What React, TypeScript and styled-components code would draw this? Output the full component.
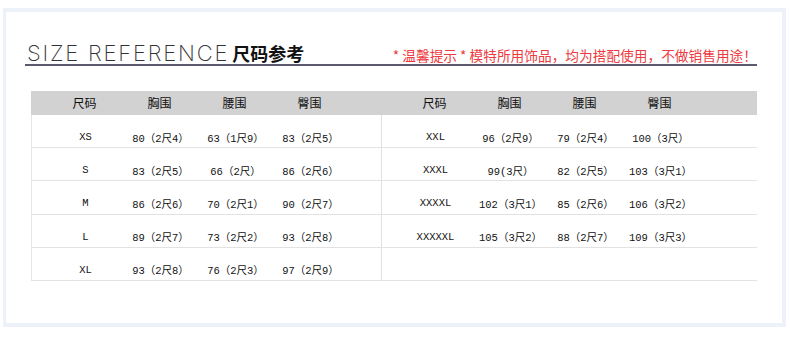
import React from "react";
import styled, { createGlobalStyle } from "styled-components";

const Global = createGlobalStyle`
  html, body { margin: 0; padding: 0; background: #ffffff; }
  body { font-family: "Noto Sans CJK SC", "Noto Sans", sans-serif; }
`;

const Frame = styled.div`
  box-sizing: border-box;
  width: 783px;
  height: 319px;
  margin: 8px 0 0 3px;
  border: 4px solid #edf2fa;
  border-left-width: 3px;
  background: #ffffff;
  padding: 0 25px 0 19px;
`;

const TitleRow = styled.div`
  display: flex;
  align-items: baseline;
  justify-content: space-between;
  padding: 31px 0 1px 2px;
  border-bottom: 2px solid #5a5a6c;
`;

const Title = styled.div`
  display: flex;
  align-items: baseline;
  gap: 3px;
`;

const TitleEn = styled.span`
  font-family: "Inter", "Open Sans", sans-serif;
  font-weight: 200;
  font-size: 22px;
  line-height: 20px;
  color: #333333;
  letter-spacing: 1.8px;
`;

const TitleCn = styled.span`
  font-family: "Noto Sans CJK SC", sans-serif;
  font-weight: 700;
  font-size: 18px;
  line-height: 20px;
  color: #111111;
`;

const Notice = styled.span`
  font-family: "Noto Sans CJK SC", sans-serif;
  font-size: 13.7px;
  line-height: 14px;
  color: #ec3a40;
  white-space: pre;
`;

const Table = styled.div`
  margin: 25px 0 0 6px;
  width: 726px;
  display: flex;
  flex-direction: column;
`;

const Row = styled.div<{ $head?: boolean }>`
  display: flex;
  height: ${(p) => (p.$head ? "24px" : "33.2px")};
  box-sizing: border-box;
  background: ${(p) => (p.$head ? "#d2d2d2" : "#ffffff")};
  border-bottom: ${(p) => (p.$head ? "none" : "1px solid #e2e2e2")};
  border-left: ${(p) => (p.$head ? "none" : "1px solid #e6e6e6")};
`;

const Half = styled.div<{ $right?: boolean; $head?: boolean }>`
  display: grid;
  grid-template-columns: 16px repeat(4, 75px);
  align-items: center;
  width: ${(p) => (p.$right ? "376px" : "349px")};
  box-sizing: border-box;
  padding-top: ${(p) => (p.$head ? "0" : "12px")};
  border-left: ${(p) => (p.$right && !p.$head ? "1px solid #e0e0e0" : "none")};
  ${(p) => (p.$right && p.$head ? "padding-left: 1px;" : "")}
`;

const HeadCell = styled.div`
  text-align: center;
  font-family: "Noto Sans CJK SC", sans-serif;
  font-size: 12px;
  color: #111111;
  line-height: 24px;
`;

const Cell = styled.div`
  text-align: center;
  font-family: "Liberation Mono", "Noto Sans CJK SC", monospace;
  font-size: 10.5px;
  color: #111111;
  white-space: pre;
`;

const Spacer = styled.div``;

const heads = ["尺码", "胸围", "腰围", "臀围"];

const left = [
  ["XS", "80（2尺4）", "63（1尺9）", "83（2尺5）"],
  ["S", "83（2尺5）", "66（2尺）", "86（2尺6）"],
  ["M", "86（2尺6）", "70（2尺1）", "90（2尺7）"],
  ["L", "89（2尺7）", "73（2尺2）", "93（2尺8）"],
  ["XL", "93（2尺8）", "76（2尺3）", "97（2尺9）"],
];

const right = [
  ["XXL", "96（2尺9）", "79（2尺4）", "100（3尺）"],
  ["XXXL", "99(3尺）", "82（2尺5）", "103（3尺1）"],
  ["XXXXL", "102（3尺1）", "85（2尺6）", "106（3尺2）"],
  ["XXXXXL", "105（3尺2）", "88（2尺7）", "109（3尺3）"],
  ["", "", "", ""],
];

export default function App() {
  return (
    <>
      <Global />
      <Frame>
        <TitleRow>
          <Title>
            <TitleEn>SIZE REFERENCE</TitleEn>
            <TitleCn>尺码参考</TitleCn>
          </Title>
          <Notice>* 温馨提示 * 模特所用饰品，均为搭配使用，不做销售用途！</Notice>
        </TitleRow>
        <Table>
          <Row $head>
            <Half $head>
              <Spacer />
              {heads.map((h) => (
                <HeadCell key={h}>{h}</HeadCell>
              ))}
            </Half>
            <Half $head $right>
              <Spacer />
              {heads.map((h) => (
                <HeadCell key={h}>{h}</HeadCell>
              ))}
            </Half>
          </Row>
          {left.map((l, i) => (
            <Row key={i}>
              <Half>
                <Spacer />
                {l.map((c, j) => (
                  <Cell key={j}>{c}</Cell>
                ))}
              </Half>
              <Half $right>
                <Spacer />
                {right[i].map((c, j) => (
                  <Cell key={j}>{c}</Cell>
                ))}
              </Half>
            </Row>
          ))}
        </Table>
      </Frame>
    </>
  );
}
